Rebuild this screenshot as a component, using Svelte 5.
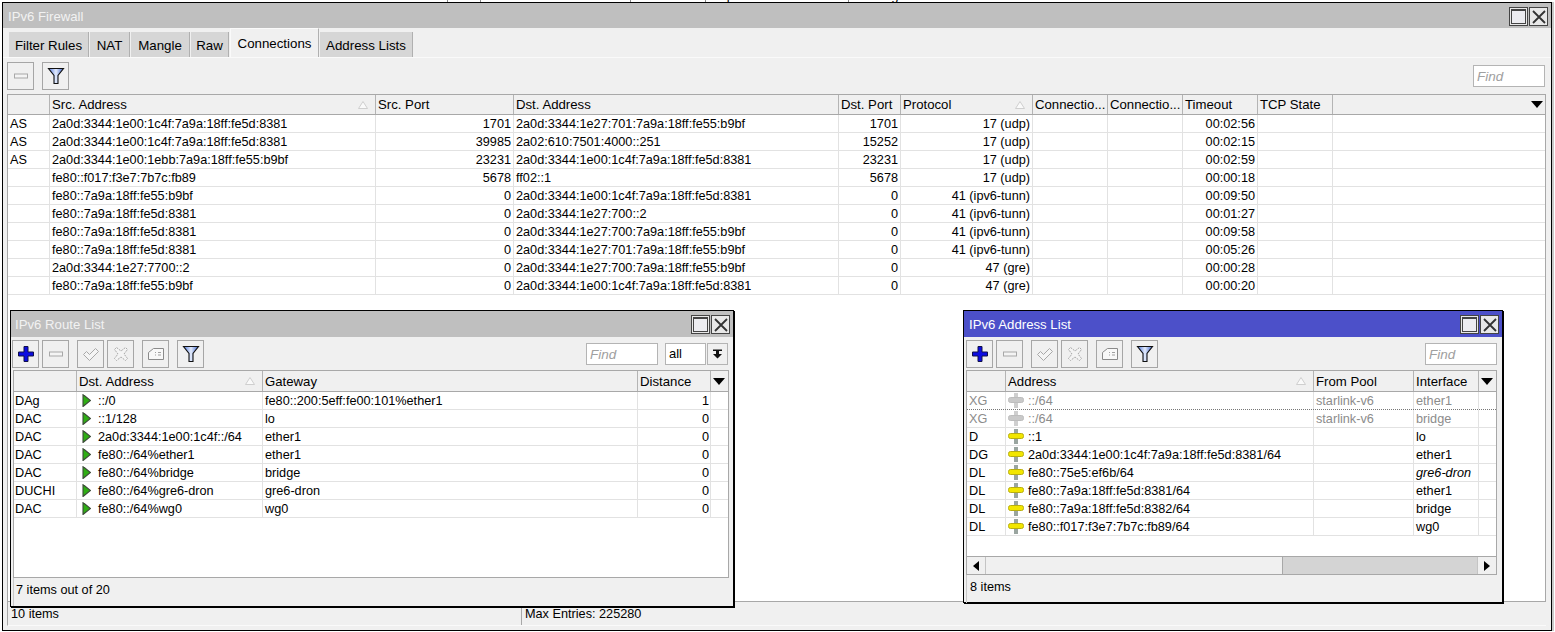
<script>
  const mainCols = [
    { w: 42, label: '' },
    { w: 326, label: 'Src. Address', sort: true },
    { w: 138, label: 'Src. Port', right: true },
    { w: 325, label: 'Dst. Address' },
    { w: 62, label: 'Dst. Port', right: true },
    { w: 132, label: 'Protocol', right: true, sort: true },
    { w: 75, label: 'Connectio...' },
    { w: 75, label: 'Connectio...' },
    { w: 75, label: 'Timeout', right: true },
    { w: 75, label: 'TCP State' }
  ];
  const mainRows = [
    ['AS', '2a0d:3344:1e00:1c4f:7a9a:18ff:fe5d:8381', '1701', '2a0d:3344:1e27:701:7a9a:18ff:fe55:b9bf', '1701', '17 (udp)', '', '', '00:02:56', ''],
    ['AS', '2a0d:3344:1e00:1c4f:7a9a:18ff:fe5d:8381', '39985', '2a02:610:7501:4000::251', '15252', '17 (udp)', '', '', '00:02:15', ''],
    ['AS', '2a0d:3344:1e00:1ebb:7a9a:18ff:fe55:b9bf', '23231', '2a0d:3344:1e00:1c4f:7a9a:18ff:fe5d:8381', '23231', '17 (udp)', '', '', '00:02:59', ''],
    ['', 'fe80::f017:f3e7:7b7c:fb89', '5678', 'ff02::1', '5678', '17 (udp)', '', '', '00:00:18', ''],
    ['', 'fe80::7a9a:18ff:fe55:b9bf', '0', '2a0d:3344:1e00:1c4f:7a9a:18ff:fe5d:8381', '0', '41 (ipv6-tunn)', '', '', '00:09:50', ''],
    ['', 'fe80::7a9a:18ff:fe5d:8381', '0', '2a0d:3344:1e27:700::2', '0', '41 (ipv6-tunn)', '', '', '00:01:27', ''],
    ['', 'fe80::7a9a:18ff:fe5d:8381', '0', '2a0d:3344:1e27:700:7a9a:18ff:fe55:b9bf', '0', '41 (ipv6-tunn)', '', '', '00:09:58', ''],
    ['', 'fe80::7a9a:18ff:fe5d:8381', '0', '2a0d:3344:1e27:701:7a9a:18ff:fe55:b9bf', '0', '41 (ipv6-tunn)', '', '', '00:05:26', ''],
    ['', '2a0d:3344:1e27:7700::2', '0', '2a0d:3344:1e27:700:7a9a:18ff:fe55:b9bf', '0', '47 (gre)', '', '', '00:00:28', ''],
    ['', 'fe80::7a9a:18ff:fe55:b9bf', '0', '2a0d:3344:1e00:1c4f:7a9a:18ff:fe5d:8381', '0', '47 (gre)', '', '', '00:00:20', '']
  ];
  const routeCols = [
    { w: 63, label: '' },
    { w: 186, label: 'Dst. Address', sort: true, icon: 'route' },
    { w: 375, label: 'Gateway' },
    { w: 73, label: 'Distance', right: true }
  ];
  const routeRows = [
    ['DAg', '::/0', 'fe80::200:5eff:fe00:101%ether1', '1'],
    ['DAC', '::1/128', 'lo', '0'],
    ['DAC', '2a0d:3344:1e00:1c4f::/64', 'ether1', '0'],
    ['DAC', 'fe80::/64%ether1', 'ether1', '0'],
    ['DAC', 'fe80::/64%bridge', 'bridge', '0'],
    ['DUCHI', 'fe80::/64%gre6-dron', 'gre6-dron', '0'],
    ['DAC', 'fe80::/64%wg0', 'wg0', '0']
  ];
  const addrCols = [
    { w: 39, label: '' },
    { w: 308, label: 'Address', sort: true, icon: 'addr' },
    { w: 100, label: 'From Pool' },
    { w: 65, label: 'Interface' }
  ];
  const addrRows = [
    ['XG', '::/64', 'starlink-v6', 'ether1'],
    ['XG', '::/64', 'starlink-v6', 'bridge'],
    ['D', '::1', '', 'lo'],
    ['DG', '2a0d:3344:1e00:1c4f:7a9a:18ff:fe5d:8381/64', '', 'ether1'],
    ['DL', 'fe80::75e5:ef6b/64', '', 'gre6-dron'],
    ['DL', 'fe80::7a9a:18ff:fe5d:8381/64', '', 'ether1'],
    ['DL', 'fe80::7a9a:18ff:fe5d:8382/64', '', 'bridge'],
    ['DL', 'fe80::f017:f3e7:7b7c:fb89/64', '', 'wg0']
  ];
  const tabs = [
    { t: 'Filter Rules', w: 80 },
    { t: 'NAT', w: 40 },
    { t: 'Mangle', w: 59 },
    { t: 'Raw', w: 38 },
    { t: 'Connections', w: 89 },
    { t: 'Address Lists', w: 93 }
  ];
  const gridOf = (cols) => cols.map((c) => c.w + 'px').join(' ') + ' 1fr';
</script>

{#snippet icon(kind)}
  <svg class="ico" width="18" height="18" viewBox="0 0 18 18">
    {#if kind === 'plus'}
      <path d="M7 1.500h4v5.500h5.500v4H11v5.500H7V11H1.500V7H7z" fill="#0c0ce0" stroke="#10104a" stroke-width="1" />
    {:else if kind === 'minus'}
      <rect x="2.500" y="7" width="13" height="4" fill="#f4f4f4" stroke="#a8a8a8" />
    {:else if kind === 'check'}
      <path d="M1.500 9.500l3-3 3 3 6-6 3 3-9 9z" fill="#f4f4f4" stroke="#a8a8a8" />
    {:else if kind === 'cross'}
      <path d="M4.500 2.500l4.500 3.500 4.500-3.500 2 2-3.500 4.500 3.500 4.500-2 2-4.500-3.500-4.500 3.500-2-2 3.500-4.500-3.500-4.500z" fill="#f4f4f4" stroke="#a8a8a8" stroke-dasharray="2 1" />
    {:else if kind === 'note'}
      <path d="M6.500 3.500h10v11h-15v-7z" fill="#f8f8f8" stroke="#8a8a8a" />
      <path d="M8 7.500h1m2 0h3M8 10h1m2 0h3" stroke="#a0a0a0" fill="none" />
    {:else if kind === 'filter'}
      <defs>
        <linearGradient id="fun" x1="0" y1="0" x2="1" y2="0">
          <stop offset="0" stop-color="#4f78de" />
          <stop offset="0.5" stop-color="#e4ecfc" />
          <stop offset="1" stop-color="#3a62cc" />
        </linearGradient>
      </defs>
      <path d="M1.500 1.500h15l-5.500 7v8h-4v-8z" fill="url(#fun)" stroke="#111" stroke-width="1.100" />
    {/if}
  </svg>
{/snippet}

{#snippet winButtons()}
  <div class="winbtns">
    <span class="winbtn"><i class="maxbox"></i></span>
    <span class="winbtn">
      <svg width="14" height="14" viewBox="0 0 14 14"><path d="M1 1l12 12M13 1L1 13" stroke="#333" stroke-width="1.800" /></svg>
    </span>
  </div>
{/snippet}

{#snippet sortMark()}
  <svg class="sortmark" width="10" height="8" viewBox="0 0 10 8"><path d="M5 .5L9.500 7.500H.5z" fill="#fafafa" stroke="#cfcfcf" /></svg>
{/snippet}

{#snippet listTable(cols, rows, kind)}
  <div class="table">
    <div class="head" style="grid-template-columns: {gridOf(cols)}">
      {#each cols as c}
        <div class="hcell">
          <span>{c.label}</span>
          {#if c.sort}{@render sortMark()}{/if}
        </div>
      {/each}
      <div class="hcell last"><i class="downarrow"></i></div>
    </div>
    {#each rows as r, ri}
      <div
        class="row"
        class:muted={kind === 'addr' && r[0] === 'XG'}
        class:dotted={kind === 'addr' && ri === 0}
        style="grid-template-columns: {gridOf(cols)}"
      >
        {#each r as v, i}
          <div class="cell" class:right={cols[i].right} class:italic={kind === 'addr' && i === 3 && v === 'gre6-dron'}>
            {#if cols[i].icon === 'route'}
              <svg class="rowico route" width="9" height="13" viewBox="0 0 9 13">
                <path d="M1 .5L8.500 6.500 1 12.500z" fill="#2fae14" />
                <path d="M1 0v13M1 .5L8.500 6.500 1 12.500" fill="none" stroke="#3d4a3a" stroke-width="1.100" />
              </svg>
            {:else if cols[i].icon === 'addr'}
              <svg class="rowico addr" width="16" height="15" viewBox="0 0 16 15">
                <rect x="6" y="0" width="4" height="15" fill={r[0] === 'XG' ? '#cfcfcf' : '#9aa5a0'} />
                <rect x="0.500" y="4.500" width="15" height="5" rx="2" fill={r[0] === 'XG' ? '#c9c9c9' : '#f2e600'} stroke={r[0] === 'XG' ? '#bdbdbd' : '#b8ae10'} />
              </svg>
            {/if}
            <span>{v}</span>
          </div>
        {/each}
        <div class="cell filler"></div>
      </div>
    {/each}
  </div>
{/snippet}

{#snippet floatingTools()}
  <button class="tool">{@render icon('plus')}</button>
  <button class="tool">{@render icon('minus')}</button>
  <button class="tool sep">{@render icon('check')}</button>
  <button class="tool">{@render icon('cross')}</button>
  <button class="tool sep">{@render icon('note')}</button>
  <button class="tool sep">{@render icon('filter')}</button>
{/snippet}

<div class="stage">
  <div class="behind">
    <span class="b1">▲</span><span class="b2">Time</span><span class="b3">Buffer</span><span class="b4">Topics</span><span class="b5">Message</span>
  </div>

  <div class="window main">
    <div class="title"><span>IPv6 Firewall</span>{@render winButtons()}</div>
    <div class="tabs">
      {#each tabs as t}
        <div class="tab" class:active={t.t === 'Connections'} style="width: {t.w}px">{t.t}</div>
      {/each}
    </div>
    <div class="panel">
      <div class="toolbar maintools">
        <button class="tool">{@render icon('minus')}</button>
        <button class="tool sep">{@render icon('filter')}</button>
        <div class="find mainfind">Find</div>
      </div>
      {@render listTable(mainCols, mainRows, 'main')}
      <div class="status mainstatus">
        <div class="scell first">10 items</div>
        <div class="scell">Max Entries: 225280</div>
      </div>
    </div>
  </div>

  <div class="window float routewin">
    <div class="title"><span>IPv6 Route List</span>{@render winButtons()}</div>
    <div class="toolbar routetools">
      {@render floatingTools()}
      <div class="find">Find</div>
      <div class="combo">all</div>
      <button class="combobtn">
        <svg width="11" height="11" viewBox="0 0 11 11"><path d="M1 1.500h9v1.500H1zM4 3h3v3h3L5.500 10.500 1 6h3z" fill="#111" /></svg>
      </button>
    </div>
    {@render listTable(routeCols, routeRows, 'route')}
    <div class="status floatstatus">7 items out of 20</div>
  </div>

  <div class="window float addrwin">
    <div class="title active"><span>IPv6 Address List</span>{@render winButtons()}</div>
    <div class="toolbar addrtools">
      {@render floatingTools()}
      <div class="find">Find</div>
    </div>
    {@render listTable(addrCols, addrRows, 'addr')}
    <div class="scrollbar">
      <span class="sbtn"><i class="tri left"></i></span>
      <span class="thumb"></span>
      <span class="track"></span>
      <span class="sbtn"><i class="tri rightt"></i></span>
    </div>
    <div class="status floatstatus">8 items</div>
  </div>
</div>

<style>
  :global(body) {
    margin: 0;
    background: #fff;
  }
  .stage,
  .stage div,
  .stage button,
  .stage span {
    box-sizing: border-box;
  }
  .stage {
    position: relative;
    width: 1555px;
    height: 632px;
    overflow: hidden;
    background: #fff;
    font-family: "Liberation Sans", Arial, sans-serif;
    font-size: 12.7px;
    color: #000;
    display: flex;
    flex-direction: column;
  }
  .behind {
    position: relative;
    height: 2px;
    flex: none;
    overflow: hidden;
    font-size: 13px;
  }
  .behind span {
    position: absolute;
    bottom: 0;
    line-height: 13px;
    border-left: 1px solid #888;
    padding-left: 2px;
  }
  .b1 { left: 447px; padding-left: 15px !important; }
  .b2 { left: 480px; padding-left: 7px !important; }
  .b3 { left: 630px; }
  .b4 { left: 705px; padding-left: 7px !important; }
  .b5 { left: 848px; padding-left: 4px !important; }

  .window {
    background: #f0f0f0;
    border: 1px solid #000;
    display: flex;
    flex-direction: column;
  }
  .main {
    flex: none;
    height: 629px;
    margin-left: 2px;
    width: 1550px;
    box-shadow: 2px 0 0 #c8c8c8;
  }
  .float {
    position: absolute;
    top: 310px;
    box-shadow: 1px 1px 0 #000;
  }
  .routewin {
    left: 10px;
    width: 724px;
    height: 297px;
  }
  .addrwin {
    left: 963px;
    width: 540px;
    height: 293px;
  }

  .title {
    flex: none;
    height: 25px;
    background: #bfbfbf;
    color: #f2f2f2;
    font-size: 13.200px;
    display: flex;
    align-items: center;
    justify-content: space-between;
    padding: 2px 3px 0 5px;
  }
  .float .title {
    height: 26px;
    padding: 1px 3px 0 4px;
  }
  .title.active {
    background: #4c50c9;
    color: #fff;
  }
  .addrwin .title {
    padding-left: 5px;
  }
  .winbtns {
    display: flex;
    gap: 1px;
  }
  .winbtn {
    width: 19px;
    height: 19px;
    border: 1px solid #444;
    background: #e8e8e8;
    display: flex;
    align-items: center;
    justify-content: center;
  }
  .maxbox {
    display: block;
    width: 15px;
    height: 15px;
    border: 1px solid #444;
    border-top-width: 2px;
    background: #ececf0;
    box-sizing: border-box;
  }

  .tabs {
    flex: none;
    height: 30px;
    padding-left: 6px;
    display: flex;
    align-items: flex-end;
    gap: 1px;
    border-bottom: 1px solid #fafafa;
  }
  .tab {
    height: 25px;
    padding-top: 2px;
    font-size: 13.300px;
    background: #d6d6d6;
    border-right: 1px solid #b0b0b0;
    display: flex;
    align-items: center;
    justify-content: center;
  }
  .tab.active {
    height: 29px;
    padding-top: 0;
    background: #f0f0f0;
    border: 1px solid #fafafa;
    border-bottom: 0;
    border-right: 1px solid #b0b0b0;
  }

  .panel {
    flex: 1;
    min-height: 0;
    display: flex;
    flex-direction: column;
    padding: 0 5px 4px 4px;
  }
  .toolbar {
    flex: none;
    display: flex;
    align-items: center;
    gap: 3px;
    height: 33px;
  }
  .maintools {
    height: 36px;
  }
  .routetools {
    padding: 0 5px 0 1px;
  }
  .addrtools {
    padding: 0 5px 0 2px;
  }
  .tool {
    width: 27px;
    height: 28px;
    padding: 0;
    border: 1px solid #a6a6a6;
    background: #f0f0f0;
    display: flex;
    align-items: center;
    justify-content: center;
  }
  .sep {
    margin-left: 5px;
  }
  .ico {
    display: block;
  }
  .find {
    width: 72px;
    height: 22px;
    margin-left: auto;
    border: 1px solid #b4b4b4;
    background: #fff;
    color: #a0a0a0;
    font-style: italic;
    font-size: 13.500px;
    padding-left: 3px;
    line-height: 21px;
  }
  .mainfind {
    margin-right: 1px;
  }
  .combo {
    width: 41px;
    height: 22px;
    margin-left: 4px;
    border: 1px solid #b4b4b4;
    background: #fff;
    font-size: 13px;
    padding-left: 3px;
    line-height: 20px;
  }
  .combobtn {
    width: 21px;
    height: 22px;
    padding: 0;
    margin-left: -2px;
    border: 1px solid #b4b4b4;
    background: #f0f0f0;
    display: flex;
    align-items: center;
    justify-content: center;
  }

  .table {
    flex: 1;
    min-height: 0;
    background: #fff;
    border-left: 1px solid #a8a8a8;
    border-right: 1px solid #a8a8a8;
    border-bottom: 1px solid #a8a8a8;
    display: flex;
    flex-direction: column;
  }
  .routewin .table,
  .addrwin .table {
    margin-left: 2px;
    margin-right: 4px;
  }
  .addrwin .table {
    flex: none;
    height: 186px;
    margin-right: 5px;
    border-bottom: 0;
  }
  .head {
    flex: none;
    display: grid;
    height: 21px;
    background: #f0f0f0;
    border-top: 1px solid #a8a8a8;
    border-bottom: 1px solid #a8a8a8;
  }
  .float .head {
    height: 22px;
  }
  .hcell {
    border-right: 1px solid #b4b4b4;
    padding-left: 2px;
    display: flex;
    align-items: center;
    justify-content: space-between;
    white-space: nowrap;
    overflow: hidden;
    font-size: 13.200px;
  }
  .sortmark {
    margin-right: 7px;
    flex: none;
  }
  .hcell.last {
    border-right: 0;
    justify-content: flex-end;
    padding-right: 3px;
  }
  .main .hcell.last {
    padding-right: 2px;
  }
  .downarrow {
    display: block;
    width: 0;
    height: 0;
    border-left: 6px solid transparent;
    border-right: 6px solid transparent;
    border-top: 7px solid #000;
  }
  .row {
    flex: none;
    display: grid;
    height: 18px;
    border-bottom: 1px solid #e2e2e2;
  }
  .row.muted {
    color: #8c8c8c;
  }
  .row.dotted {
    border-bottom: 1px dotted #777;
  }
  .cell {
    border-right: 1px solid #e2e2e2;
    padding: 2px 2px 0 2px;
    display: flex;
    align-items: center;
    white-space: nowrap;
    overflow: hidden;
    line-height: 15px;
  }
  .routewin .cell:first-child {
    padding-left: 1px;
  }
  .routewin .cell.right {
    padding-right: 1px;
  }
  .cell.right {
    justify-content: flex-end;
  }
  .cell.italic {
    font-style: italic;
  }
  .cell.filler {
    border-right: 0;
  }
  .rowico {
    flex: none;
    margin-top: -2px;
  }
  .rowico.route {
    margin-left: 3px;
    margin-right: 7px;
  }
  .rowico.addr {
    margin-right: 4px;
  }

  .scrollbar {
    flex: none;
    height: 19px;
    margin: 0 5px 0 2px;
    display: flex;
    border: 1px solid #a8a8a8;
  }
  .sbtn {
    flex: none;
    width: 18px;
    background: #f0f0f0;
    display: flex;
    align-items: center;
    justify-content: center;
  }
  .thumb {
    flex: none;
    width: 298px;
    background: #f0f0f0;
    border-left: 1px solid #c4c4c4;
    border-right: 1px solid #a8a8a8;
  }
  .track {
    flex: 1;
    background: #d4d4d4;
    border-right: 1px solid #c4c4c4;
  }
  .tri {
    display: block;
    width: 0;
    height: 0;
    border-top: 5px solid transparent;
    border-bottom: 5px solid transparent;
  }
  .tri.left {
    border-right: 6px solid #000;
  }
  .tri.rightt {
    border-left: 6px solid #000;
  }

  .status {
    flex: none;
  }
  .floatstatus {
    margin-left: 2px;
    height: 28px;
    padding: 0 0 4px 3px;
    display: flex;
    align-items: center;
    border-left: 1px solid #c8c8c8;
  }
  .routewin .floatstatus {
    padding-left: 2px;
  }
  .mainstatus {
    height: 24px;
    display: flex;
    border-bottom: 1px solid #fafafa;
    border-left: 1px solid #a8a8a8;
  }
  .scell {
    flex: 1;
    padding: 0 0 0 3px;
    display: flex;
    align-items: center;
  }
  .scell.first {
    flex: none;
    width: 514px;
    border-right: 1px solid #a8a8a8;
  }
</style>
